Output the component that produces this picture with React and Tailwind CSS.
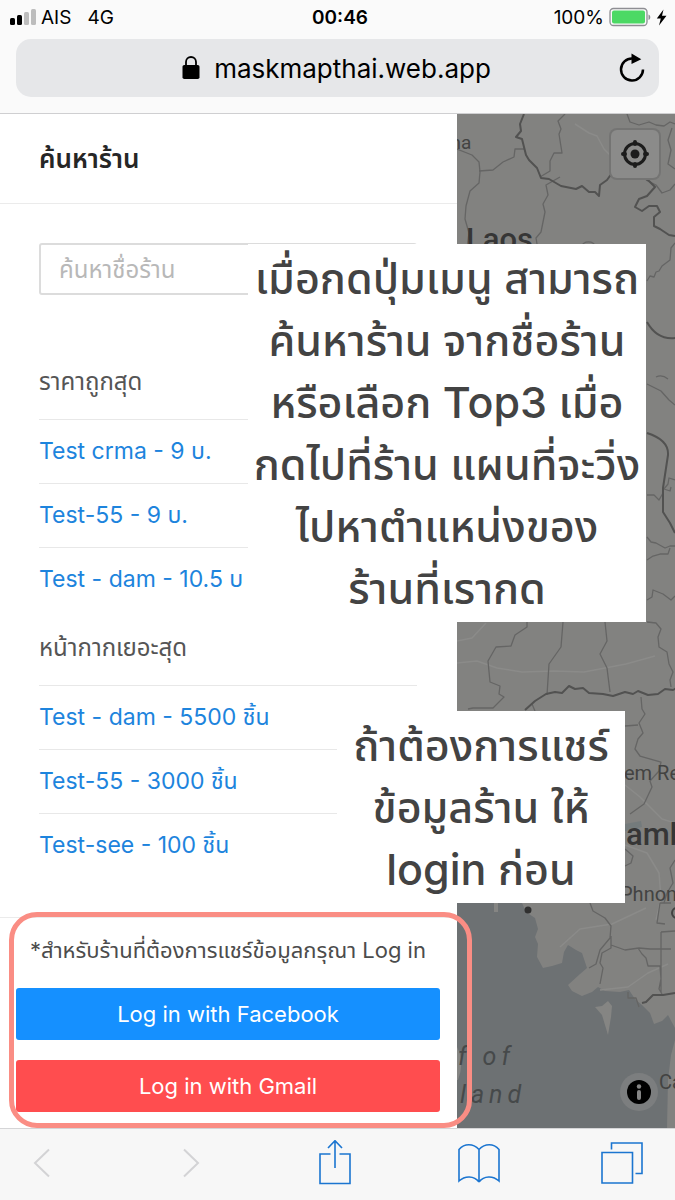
import { useState } from "react";

const cheapest = ["Test crma - 9 บ.", "Test-55 - 9 บ.", "Test - dam - 10.5 บ"];
const mostMasks = ["Test - dam - 5500 ชิ้น", "Test-55 - 3000 ชิ้น", "Test-see - 100 ชิ้น"];

function StatusBar() {
  return (
    <div className="grid grid-cols-3 items-center h-[34px] pl-[9px] pr-2 text-[19px] leading-none">
      <div className="flex items-center">
        <svg width="28" height="18" viewBox="0 0 28 18" aria-hidden="true">
          <rect x="1" y="10" width="5" height="7" rx="1.5" fill="#000" />
          <rect x="8" y="7" width="5" height="10" rx="1.5" fill="#000" />
          <rect x="15" y="4" width="5" height="13" rx="1.5" fill="#bdbdbd" />
          <rect x="22" y="1" width="5" height="16" rx="1.5" fill="#bdbdbd" />
        </svg>
        <span className="ml-1">AIS</span>
        <span className="ml-4">4G</span>
      </div>
      <div className="text-center font-semibold pl-1">00:46</div>
      <div className="flex items-center justify-end">
        <span>100%</span>
        <svg className="ml-[5px]" width="43" height="20" viewBox="0 0 43 20" aria-hidden="true">
          <rect x="1" y="1.500" width="37" height="17" rx="3.5" fill="none" stroke="#8e8e93" strokeWidth="1.3" />
          <rect x="3" y="3.500" width="33" height="13" rx="2" fill="#4cd964" />
          <path d="M39.500 7.500c2.400.8 2.400 4.700 0 5.500z" fill="#8e8e93" />
        </svg>
        <svg className="ml-1" width="11" height="17" viewBox="0 0 11 17" aria-hidden="true">
          <path d="M7.500 0.500L.8 9.500h4L3 16.500 10.500 6.800H6z" fill="#000" />
        </svg>
      </div>
    </div>
  );
}

function AddressBar() {
  return (
    <div className="flex items-center justify-center relative mx-4 mt-[5px] h-[58px] rounded-[15px] bg-[#e6e7e9]">
      <svg width="18" height="24" viewBox="0 0 18 24" aria-hidden="true">
        <rect x="0.500" y="9" width="17" height="14" rx="1.8" fill="#000" />
        <path d="M4 11V6a5 5 0 0 1 10 0V11" fill="none" stroke="#000" strokeWidth="1.8" />
      </svg>
      <span className="ml-[14px] mr-[2px] pt-[2px] text-[26px] leading-8">maskmapthai.web.app</span>
      <button type="button" aria-label="Reload" className="absolute right-[13px] top-[14px]">
        <svg width="28" height="30" viewBox="0 0 28 30" fill="none">
          <path d="M14.500 5.500A11 11 0 1 0 25 16.500" stroke="#000" strokeWidth="2.500" />
          <path d="M13.500 0.500v10.500l9.800-4.800z" fill="#000" />
        </svg>
      </button>
    </div>
  );
}

function StoreList({ title, items }) {
  return (
    <section>
      <h2 className="flex items-center h-[74px] text-[24px] text-[#555]">{title}</h2>
      <ul>
        {items.map((item) => (
          <li key={item} className="flex items-center h-16 border-t border-[#e8e8e8]">
            <a href="#" className="text-[23px] text-[#1d84dd] whitespace-nowrap">{item}</a>
          </li>
        ))}
      </ul>
    </section>
  );
}

function Drawer() {
  const [search, setSearch] = useState("");

  return (
    <aside className="flex flex-col w-[457px] shrink-0 bg-white">
      <header className="flex items-center h-[90px] px-[39px] border-b border-[#ebebeb]">
        <h1 className="text-[26px] font-semibold text-[#262626]">ค้นหาร้าน</h1>
      </header>
      <div className="grow pl-[39px] pr-10 pt-[39px]">
        <input
          type="text"
          aria-label="ค้นหาชื่อร้าน"
          placeholder="ค้นหาชื่อร้าน"
          value={search}
          onChange={(e) => setSearch(e.target.value)}
          className="block w-full h-[52px] mb-[50px] px-[18px] rounded-[3px] border-2 border-[#dcdcdc] text-[24px] placeholder:text-[#b8b8b8] outline-none"
        />
        <StoreList title="ราคาถูกสุด" items={cheapest} />
        <StoreList title="หน้ากากเยอะสุด" items={mostMasks} />
      </div>
      <footer className="relative border-t border-[#ebebeb] pl-4 pr-[17px] pb-4">
        <p className="flex items-center justify-center h-[64px] mb-[6px] text-[22px] text-[#4c4c4c] whitespace-nowrap">
          *สำหรับร้านที่ต้องการแชร์ข้อมูลกรุณา Log in
        </p>
        <button type="button" className="block w-full h-[52px] rounded-[3px] bg-[#1590ff] text-[22px] text-white">
          Log in with Facebook
        </button>
        <button type="button" className="block w-full h-[52px] mt-5 rounded-[3px] bg-[#ff4d4f] text-[22px] text-white">
          Log in with Gmail
        </button>
        <div className="absolute z-10 -top-[6px] left-[9px] -right-[15px] bottom-0 rounded-[28px] border-[5px] border-[#fa8d84] pointer-events-none" />
      </footer>
    </aside>
  );
}

function MapView() {
  return (
    <div className="relative grow min-w-0 bg-[#828280] overflow-hidden">
      <svg
        className="absolute inset-0 w-full h-full"
        viewBox="457 114 218 1014"
        preserveAspectRatio="xMinYMin slice"
        fill="none"
        strokeLinejoin="round"
        role="img"
        aria-label="Map"
      >
        <path fill="#6d7173" d="M457 895H518L522 903 526 912 535 918 538 929 535 937 538 944 537 957 543 968 552 966 562 963 564 952 568 945 576 950 582 953 587 968 580 974 568 985 572 991 582 996 592 992 598 987 605 991 620 992 629 990 635 999 642 1005 650 1013 654 1024 662 1021 668 1015 675 1028V1040L671 1055 668 1080 667 1128H457Z" />
        <path fill="#858583" d="M595 1007L602 1006 608 1001 612 1006 611 1017 608 1035 605 1025 602 1015ZM457 1047Q465 1062 458 1080H457Z" />
        <path fill="#747b7c" d="M625 824l16-3 1 6-17 4z" />
        <path fill="#858583" d="M494 903h4v9h-4z" />
        <g stroke="#8b8b89" strokeWidth="1.500">
          <path d="M575 124l14 9 8 3 7 13 15 15" />
          <path d="M457 641l15-3 14-15M457 663l20-2 20 7 25 4 32-1 30 1 42-8 29-8" />
          <path d="M625 785l15 12 14 14 8 8 13 4M625 845l22 8 12 20 2 25-5 22M560 947l20-18 32-5 34-16M600 990l28-3 20-14 20-9" />
        </g>
        <g stroke="#656564" strokeWidth="1.300">
          <path d="M457 149l15 6 7 7 1 10-1 11-9 8-4 15-1 13 4 14-2 15-11 8" />
          <path d="M479 171l14-1 10-8 11-5 1-8 9 0" />
          <path d="M565 114l-7 7 3 8-2 5 3 19-8 0-4 8 0 10-10 6" />
          <path d="M560 177l-14 8 2 10-5 9 2 8-4 20-5 6 2 12" />
          <path d="M627 114l3 8 9 3 10-3 7 3 8 1 6-4 5 2M672 128l-4 12 3 10-3 14 7 5M646 180l10 5 6 8 8-3 5-6" />
          <path d="M581 247a8 8 0 0 1 15 0" />
          <path d="M675 243l-4 5-1 12-8 6-3 5-3 1-2 5-4-1-3 5" />
          <path d="M647 384l14 7 8 9 6 5M656 377q6-3 12 2" />
          <path d="M647 495l7 0 5 5 4-7M675 480l-6-2-1 6-4 5 6 2 1-4M647 537l4 5 5 1 9 5 5-2 5 0M647 560l6-4 7-2 8 0 2-6M647 600l5-3 1-7 10 4 8 6 4-4" />
          <path d="M647 622l9 1 5 6-3 8 1 10 8 5 2 12 4 8-3 8 1 7" />
          <path d="M527 622l0 5-12 8-4 11-15 1-8 14 2 21 10 4-1 8 5 3-11 11-20 0-5 1" />
          <path d="M563 622l-2 25-12 17-2 31M605 622l2 19-7 13 7 14 3 24M641 697l1 12 3 5-6 9 4 10-5 6-3 10 5 7 21 6-2 9-9 10 2 6-8 17-14 10M625 726l13-1M532 704l3 7" />
          <path d="M590 903l3 8 12 7 6 8-1 12-10 12-4 14-7 4M611 936l0 12-9 5-2 10 3 5-3 16M611 945l14 5 14-2 11 1 21 0M638 948l4 6 4 4 2 8 12 0 1 13-2 10 3 5M671 903l-11 0-3 20 8 1M661 932l0 60M628 992l0 6 8 0 3 9" />
          <path d="M625 849l8 7-2 7-6 3M675 860l-5 8 3 15-6 10-3 10M661 932l14-1" />
        </g>
        <g stroke="#525251" strokeWidth="2">
          <path d="M524 114l-4 10 1 7-5 6 6 2 4 16 3 5 8 8 4 10 8 1 12 7 15 3 6-3 7 6 6 0 4 4 1-11 7-5 5-7 16 1 4-5 14-2M643 177l6 4 6 6-8 9-8 3-4 8 7 4 7-5 8 0 3 6-6 5 0 9 6 3 9 6 6 1" />
          <path d="M647 322q10 18 28 16M647 433q22 7 21 22l-5 33 0 24 7 11 5 10" />
          <path d="M525 710l10-9 11-7 9-2 7 1 7-7 6 3 8-1 6 5 14 1 10 2 12-4 8 2 5-3 10 4 10-1 7-5 8 1 5-3M642 1003l4-1 7-7 10 0 12-2" />
        </g>
        <g fontFamily="Roboto, sans-serif" fill="#434342">
          <text x="446" y="149" fontSize="19">ina</text>
          <text x="466" y="250" fontSize="31" fontWeight="500" fill="#363636">Laos</text>
          <text x="624" y="780" fontSize="20">em Reap</text>
          <text x="626" y="845" fontSize="31" fontWeight="500" fill="#363636">ambodia</text>
          <text x="620" y="901" fontSize="20">Phnom</text>
          <text x="659" y="1089" fontSize="20">Ca</text>
          <g fontSize="25" fontStyle="italic" letterSpacing="5" fill="#46494a">
            <text x="458" y="1065">f of</text>
            <text x="460" y="1103">land</text>
          </g>
        </g>
        <circle cx="528" cy="910" r="3.500" fill="#303030" />
        <circle cx="677" cy="913" r="5" stroke="#434342" strokeWidth="2" />
      </svg>
      <button
        type="button"
        aria-label="My location"
        className="absolute top-4 right-4 flex items-center justify-center w-12 h-12 rounded-md bg-[#8b8b8a] ring-2 ring-[#747473]"
      >
        <svg width="28" height="28" viewBox="0 0 28 28" fill="none" stroke="#1c1c1c">
          <circle cx="14" cy="14" r="10.500" strokeWidth="3" />
          <circle cx="14" cy="14" r="4.500" fill="#1c1c1c" stroke="none" />
          <path d="M14 2v2M14 24v2M2 14h2M24 14h2" strokeWidth="4" strokeLinecap="round" />
        </svg>
      </button>
      <button
        type="button"
        aria-label="Info"
        className="absolute right-[17px] bottom-[17px] flex items-center justify-center w-[38px] h-[38px] rounded-full bg-[#7c7e7f]"
      >
        <svg width="24" height="24" viewBox="0 0 24 24">
          <circle cx="12" cy="12" r="12" fill="#000" />
          <circle cx="12" cy="6.500" r="2.200" fill="#858585" />
          <path d="M12 12v6" stroke="#858585" strokeWidth="4" strokeLinecap="round" />
        </svg>
      </button>
    </div>
  );
}

function Toolbar() {
  return (
    <nav className="flex items-center justify-between h-[72px] pl-[33px] pr-8 pb-1 border-t border-[#d5d5d7] bg-[#f7f7f7] text-[#1b75d0]">
      <button type="button" aria-label="Back" className="text-[#d3d3d5]">
        <svg width="18" height="30" viewBox="0 0 18 30" fill="none" stroke="currentColor" strokeWidth="2">
          <path d="M16 1.500L2 15l14 13.500" />
        </svg>
      </button>
      <button type="button" aria-label="Forward" className="ml-[30px] text-[#d3d3d5]">
        <svg width="18" height="30" viewBox="0 0 18 30" fill="none" stroke="currentColor" strokeWidth="2">
          <path d="M2 1.500L16 15 2 28.500" />
        </svg>
      </button>
      <button type="button" aria-label="Share" className="ml-[18px]">
        <svg width="32" height="46" viewBox="0 0 32 46" fill="none" stroke="currentColor" strokeWidth="1.600">
          <path d="M11.500 14H1v29.500h30V14H20.500M16 28V1M9 8l7-7.300L23 8" />
        </svg>
      </button>
      <button type="button" aria-label="Bookmarks" className="ml-[6px]">
        <svg width="42" height="40" viewBox="0 0 42 40" fill="none" stroke="currentColor" strokeWidth="1.600">
          <path d="M21 6.500V39M21 6.500C15 .2 6.500.2 1 6.500V38C7 32.500 16 32.500 21 39M21 6.500C27 .2 35.500.2 41 6.500V38C35 32.500 26 32.500 21 39" />
        </svg>
      </button>
      <button type="button" aria-label="Tabs">
        <svg width="42" height="42" viewBox="0 0 42 42" fill="none" stroke="currentColor" strokeWidth="1.600">
          <path d="M1 10.500h30.500V41H1zM10.500 7.500V1H41v30.500h-6.500" />
        </svg>
      </button>
    </nav>
  );
}

export default function App() {
  return (
    <div className="flex flex-col min-h-screen bg-[#fafafa] text-black font-[Inter,'Noto_Sans_Thai',sans-serif]">
      <div className="h-[114px] border-b border-[#cfcfd1]">
        <StatusBar />
        <AddressBar />
      </div>

      <main className="relative flex grow">
        <Drawer />
        <MapView />

        <div className="absolute z-20 left-[248px] right-[29px] top-[130px] h-[378px] pt-[3px] bg-white text-center text-[43px] leading-[62px] font-medium text-[#434343] whitespace-nowrap">
          <p>เมื่อกดปุ่มเมนู สามารถ</p>
          <p>ค้นหาร้าน จากชื่อร้าน</p>
          <p>หรือเลือก Top3 เมื่อ</p>
          <p>กดไปที่ร้าน แผนที่จะวิ่ง</p>
          <p>ไปหาตำแหน่งของ</p>
          <p>ร้านที่เรากด</p>
        </div>

        <div className="absolute z-20 left-[337px] right-[50px] top-[597px] h-[192px] pt-[3px] bg-white text-center text-[43px] leading-[62px] font-medium text-[#434343] whitespace-nowrap">
          <p>ถ้าต้องการแชร์</p>
          <p>ข้อมูลร้าน ให้</p>
          <p>login ก่อน</p>
        </div>
      </main>

      <Toolbar />
    </div>
  );
}
